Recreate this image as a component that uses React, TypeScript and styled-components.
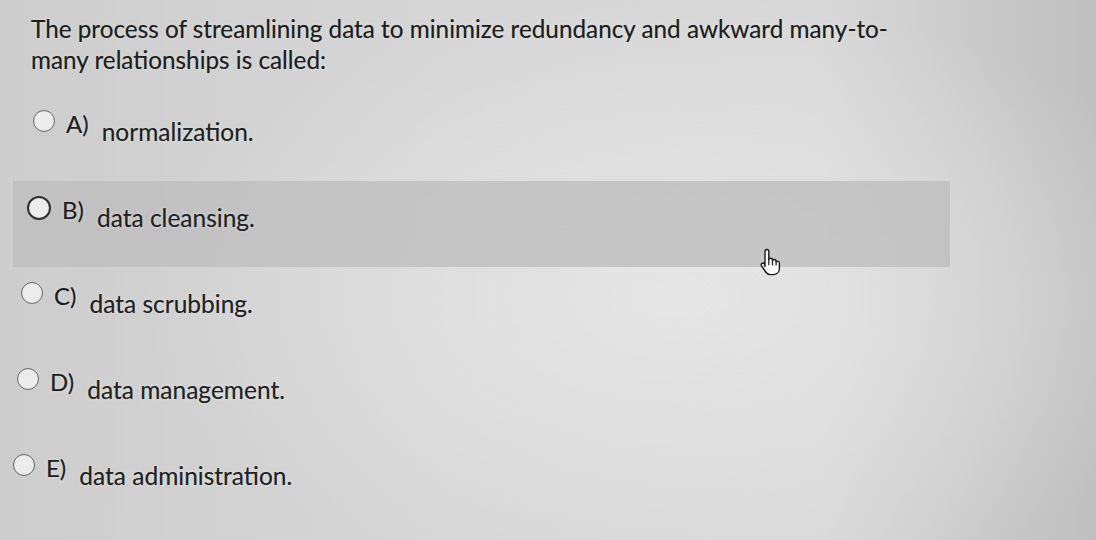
import * as React from "react";
import styled, { createGlobalStyle } from "styled-components";

const GlobalStyles = createGlobalStyle`
  html, body {
    margin: 0;
    padding: 0;
    width: 1096px;
    height: 540px;
    overflow: hidden;
  }
  body {
    font-family: Lato, "Open Sans", "Liberation Sans", sans-serif;
    color: #262626;
  }
`;

const Screen = styled.div`
  position: relative;
  width: 1096px;
  height: 540px;
  box-sizing: border-box;
  padding: 13px 0 0 0;
  background:
    radial-gradient(ellipse 70% 80% at 62% 55%, rgba(232, 232, 232, 0.85), rgba(232, 232, 232, 0) 70%),
    linear-gradient(90deg, #cdcdcd 0%, #d6d6d6 40%, #d8d8d8 75%, #bfbfbf 100%);
  overflow: hidden;
`;

const Question = styled.p`
  margin: 0 0 20px 31px;
  width: 900px;
  font-size: 24.3px;
  line-height: 31px;
  color: #1e1e1e;
  text-shadow: 0 0 1px rgba(0, 0, 0, 0.35), 0 0 3px rgba(255, 255, 255, 0.7);
`;

const OptionList = styled.div`
  display: flex;
  flex-direction: column;
  padding-left: 13px;
`;

const OptionRow = styled.div<{ $indent: number; $active?: boolean }>`
  display: flex;
  align-items: flex-start;
  gap: 11px;
  box-sizing: border-box;
  width: 937px;
  height: 86px;
  padding: 14px 0 0 ${(p) => p.$indent}px;
  background: ${(p) => (p.$active ? "rgba(188, 188, 188, 0.75)" : "transparent")};
  cursor: pointer;
`;

const Radio = styled.span<{ $active?: boolean }>`
  flex: none;
  margin-top: 1px;
  width: 20px;
  height: 20px;
  border-radius: 50%;
  border: ${(p) => (p.$active ? "2.5px solid #303030" : "1.5px solid #6a6a6a")};
  background: #ececec;
  box-shadow: inset 0 0 1px rgba(0, 0, 0, 0.15);
`;

const Letter = styled.span`
  margin-top: 1px;
  font-size: 24px;
  line-height: 28px;
  color: #1f1f1f;
  text-shadow: 0 0 1px rgba(0, 0, 0, 0.3), 0 0 3px rgba(255, 255, 255, 0.7);
`;

const Answer = styled.span`
  margin-top: 9px;
  margin-left: 2px;
  font-size: 24.5px;
  line-height: 28px;
  color: #222;
  text-shadow: 0 0 1px rgba(0, 0, 0, 0.3), 0 0 3px rgba(255, 255, 255, 0.8);
`;

const Pointer = styled.svg`
  position: absolute;
  left: 756px;
  top: 247px;
  width: 30px;
  height: 30px;
`;

const options = [
  { letter: "A)", text: "normalization.", indent: 20 },
  { letter: "B)", text: "data cleansing.", indent: 14 },
  { letter: "C)", text: "data scrubbing.", indent: 8 },
  { letter: "D)", text: "data management.", indent: 4 },
  { letter: "E)", text: "data administration.", indent: 0 },
];

export const App = () => {
  const [hovered] = React.useState(1);

  return (
    <Screen>
      <GlobalStyles />
      <Question>
        The process of streamlining data to minimize redundancy and awkward many-to-many
        relationships is called:
      </Question>
      <OptionList>
        {options.map((o, i) => (
          <OptionRow key={o.letter} $indent={o.indent} $active={i === hovered}>
            <Radio $active={i === hovered} />
            <Letter>{o.letter}</Letter>
            <Answer>{o.text}</Answer>
          </OptionRow>
        ))}
      </OptionList>
      <Pointer viewBox="0 0 30 30">
        <path
          d="M9 4.5c0-1.2 0.9-2 1.9-2s1.9 0.8 1.9 2v8.2c0.3-0.9 1-1.4 1.9-1.4 1 0 1.8 0.7 1.8 1.8v0.6c0.3-0.8 1-1.2 1.8-1.2 1 0 1.8 0.7 1.8 1.8v0.8c0.3-0.7 0.9-1 1.6-1 1 0 1.7 0.8 1.7 1.8v5.3c0 3.7-2.6 6.4-6.2 6.4h-2.6c-2.1 0-3.7-0.9-4.9-2.6l-4.1-6c-0.6-0.9-0.4-2 0.4-2.6 0.8-0.6 1.9-0.4 2.5 0.4L9 19.6V4.5z"
          fill="#fbfbfb"
          stroke="#1a1a1a"
          strokeWidth="1.4"
          strokeLinejoin="round"
        />
        <path d="M12.8 12.7v5M16.5 13.7v4.3M20.1 14.3v3.7" stroke="#1a1a1a" strokeWidth="1.2" strokeLinecap="round" />
      </Pointer>
    </Screen>
  );
};

export default App;
